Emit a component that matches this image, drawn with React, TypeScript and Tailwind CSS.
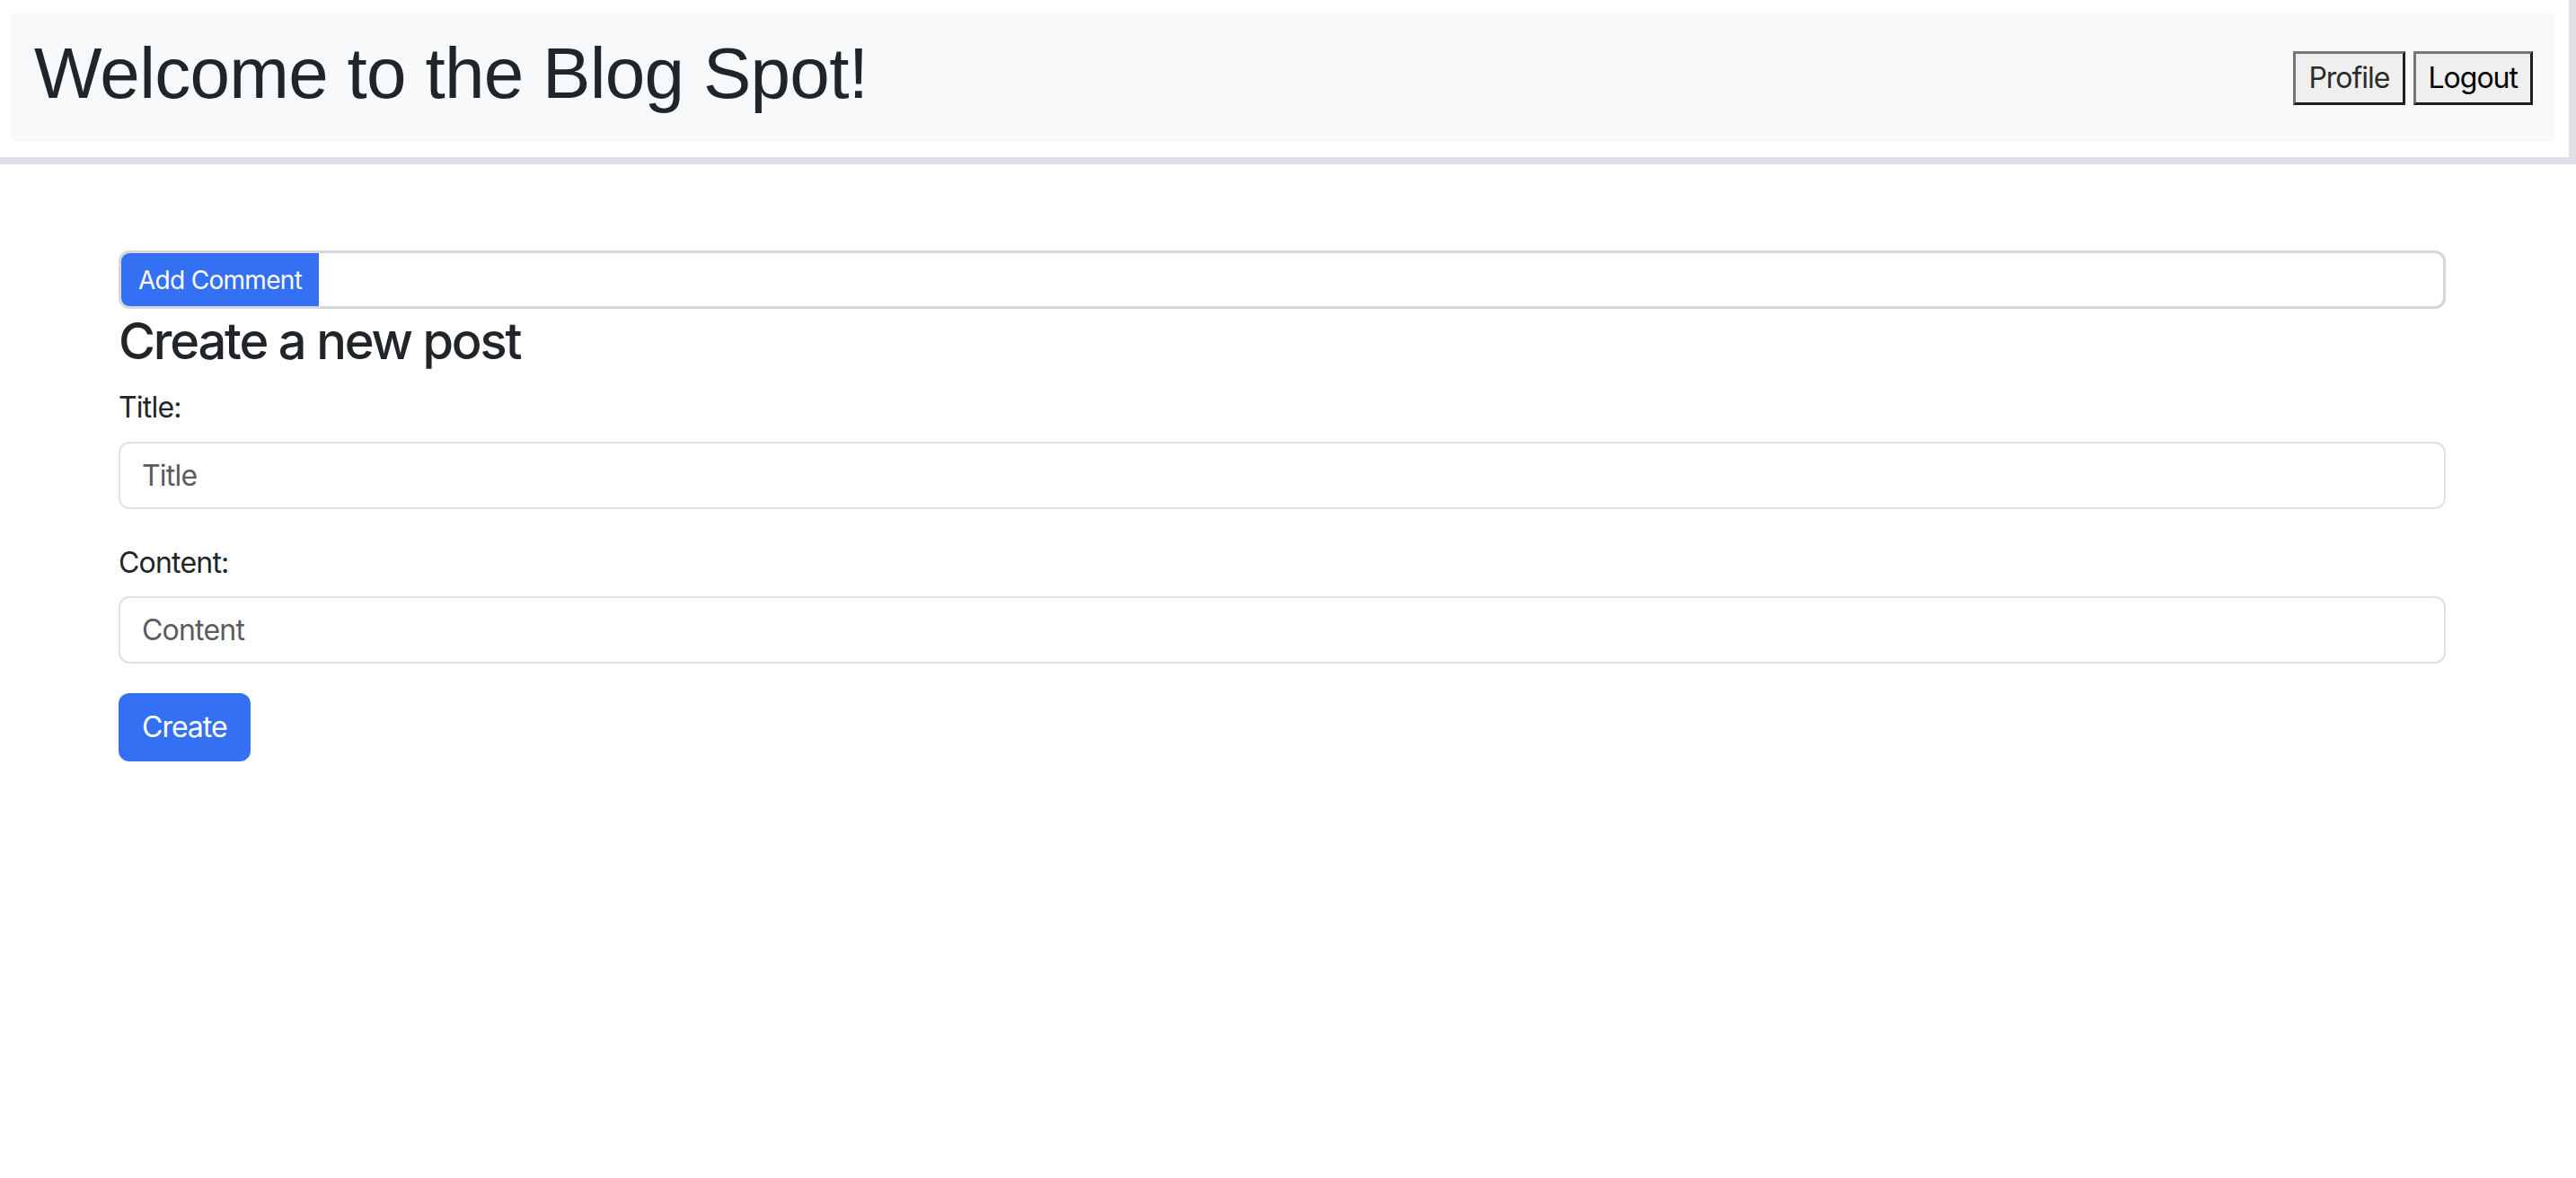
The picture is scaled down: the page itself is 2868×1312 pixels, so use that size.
import { useState } from 'react'

const App = () => {
  const [title, setTitle] = useState<string>('')
  const [content, setContent] = useState<string>('')

  return (
    <div className="min-h-screen bg-white text-[#212529] font-['Inter',sans-serif]">
      <header className="border-r-8 border-b-8 border-[#dee2e6] pt-[15px] pl-[12px] pr-[16px] pb-[17px]">
        <div className="flex items-center justify-between bg-[#f8f9fa] pl-[26px] pr-[24px]">
          <h1 className="pt-[19px] pb-[28px] font-['Liberation_Sans',Arial,sans-serif] text-[80px] leading-[96px] tracking-[-0.7px] font-normal">
            Welcome to the Blog Spot!
          </h1>
          <div className="flex gap-[9px]">
            <button className="h-[60px] px-[14px] border-[3px] border-t-[#767676] border-l-[#767676] border-b-[#1f1f1f] border-r-[#1f1f1f] bg-[#efefef] text-[32px] leading-none tracking-[-1px] text-[#2b2b2b]">
              Profile
            </button>
            <button className="h-[60px] px-[14px] border-[3px] border-t-[#767676] border-l-[#767676] border-b-[#1f1f1f] border-r-[#1f1f1f] bg-[#efefef] text-[32px] leading-none tracking-[-1px] text-black">
              Logout
            </button>
          </div>
        </div>
      </header>

      <main className="ml-[132px] w-[2591px] pt-[96px]">
        <div className="flex h-[65px] overflow-hidden rounded-[12px] border-[3px] border-[#d5d7da] bg-white">
          <div className="flex items-center bg-[#3470f4] px-[19px] text-[28px] tracking-[-0.7px] text-white">Add Comment</div>
        </div>

        <h3 className="mt-[3px] mb-[16px] text-[56px] leading-[1.2] tracking-[-2.2px] font-medium">Create a new post</h3>

        <form className="flex flex-col" onSubmit={(e) => e.preventDefault()}>
          <div className="mb-[36px]">
            <label className="mb-[14px] block text-[32px] leading-[48px] tracking-[-0.8px]">Title:</label>
            <input
              value={title}
              onChange={(e) => setTitle(e.target.value)}
              placeholder="Title"
              className="block h-[75px] w-full rounded-[12px] border-2 border-[#dee2e6] bg-white px-[24px] text-[32px] tracking-[-0.8px] placeholder:text-[#595c5f] outline-none"
            />
          </div>
          <div className="mb-[33px]">
            <label className="mb-[13px] block text-[32px] leading-[48px] tracking-[-0.8px]">Content:</label>
            <input
              value={content}
              onChange={(e) => setContent(e.target.value)}
              placeholder="Content"
              className="block h-[75px] w-full rounded-[12px] border-2 border-[#dee2e6] bg-white px-[24px] text-[32px] tracking-[-0.8px] placeholder:text-[#595c5f] outline-none"
            />
          </div>
          <div>
            <button type="submit" className="h-[76px] rounded-[12px] bg-[#3470f4] px-[26px] text-[32px] tracking-[-1px] text-white">
              Create
            </button>
          </div>
        </form>
      </main>
    </div>
  )
}

export default App
